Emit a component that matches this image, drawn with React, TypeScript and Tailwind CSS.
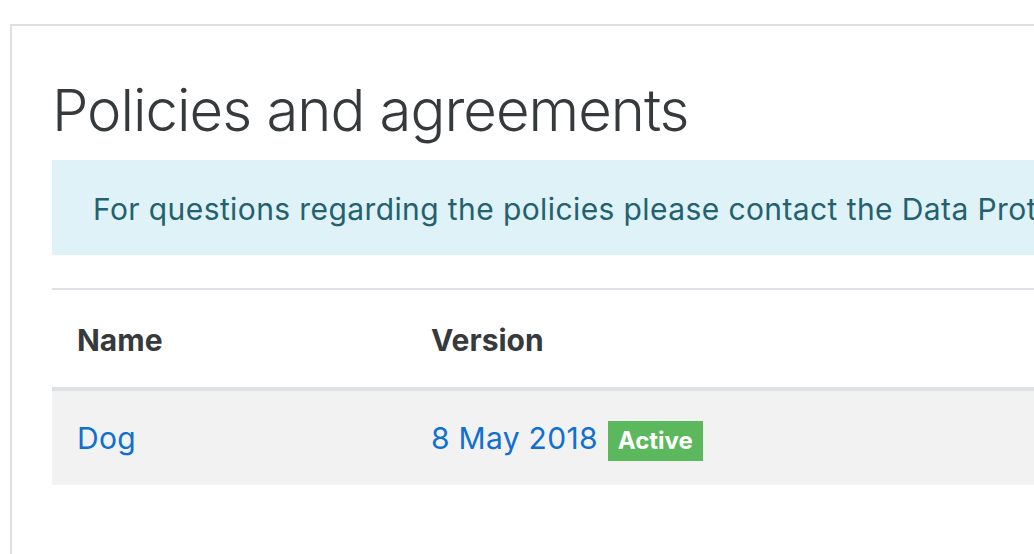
import React from "react"

const policies = [{ name: "Dog", version: "8 May 2018", status: "Active" }]

const App = () => {
  return (
    <div
      className="w-[1034px] h-[554px] overflow-hidden bg-white pl-[10px] pt-[24px]"
      style={{ fontFamily: "Inter, 'Liberation Sans', sans-serif" }}
    >
      <div className="w-[1200px] h-[600px] border-2 border-[#dfdfdf] px-[40px] pt-[48px]">
        <h2 className="text-[58px] leading-[72px] font-light text-[#373a3c] tracking-[-1px] mb-[14px]">
          Policies and agreements
        </h2>

        {/* info alert */}
        <div className="bg-[#def2f8] text-[#24616f] text-[30px] leading-[45px] tracking-[0.4px] px-[41px] pt-[27px] pb-[23px] whitespace-nowrap">
          For questions regarding the policies please contact the Data Protection Officer.
        </div>

        <table className="mt-[33px] w-full border-collapse text-[30px] text-left">
          <thead>
            <tr className="border-t-2 border-[#dee2e6] border-b-4">
              <th className="w-[354px] h-[100px] pl-[25px] pt-[4px] font-bold text-[#373a3c]">Name</th>
              <th className="h-[100px] pl-[25px] pt-[4px] font-bold text-[#373a3c]">Version</th>
            </tr>
          </thead>
          <tbody>
            {policies.map((p) => (
              <tr key={p.name} className="bg-[#f2f2f2]">
                <td className="h-[96px] pl-[25px] text-[#0f70cf] tracking-[0.3px]">{p.name}</td>
                <td className="h-[96px] pl-[25px] text-[#0f70cf] tracking-[0.3px]">
                  <span className="inline-flex items-center gap-[10px]">
                    {p.version}
                    <span className="bg-[#5cb85c] text-white font-bold text-[24px] leading-[40px] px-[10px] mt-[6px] tracking-normal">
                      {p.status}
                    </span>
                  </span>
                </td>
              </tr>
            ))}
          </tbody>
        </table>
      </div>
    </div>
  )
}

export default App
